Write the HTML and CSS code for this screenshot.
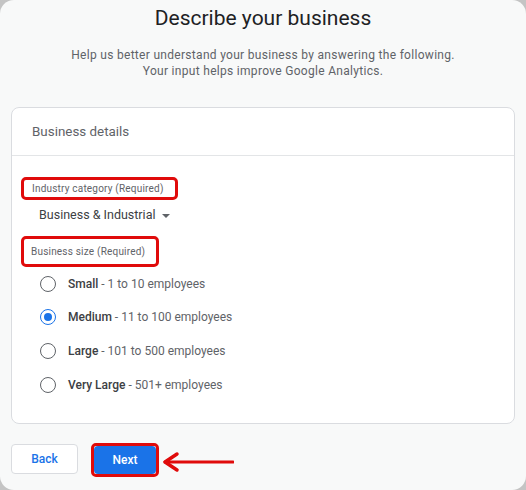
FILE: index.html
```html
<!DOCTYPE html>
<html lang="en">
<head>
  <meta charset="UTF-8">
  <title>Describe your business</title>
  <link rel="stylesheet" href="styles.css">
</head>
<body>
  <div class="frame">
    <h1>Describe your business</h1>
    <p class="intro">Help us better understand your business by answering the following.<br>Your input helps improve Google Analytics.</p>

    <div class="card">
      <div class="card-head">Business details</div>
      <div class="card-body">
        <span class="field-label mark">Industry category (Required)</span>
        <div class="select">Business &amp; Industrial <span class="caret"></span></div>

        <span class="field-label mark tall">Business size (Required)</span>
        <div class="radios">
          <label class="radio"><span class="dot"></span><b>Small</b>&nbsp;- 1 to 10 employees</label>
          <label class="radio on"><span class="dot"></span><b>Medium</b>&nbsp;- 11 to 100 employees</label>
          <label class="radio"><span class="dot"></span><b>Large</b>&nbsp;- 101 to 500 employees</label>
          <label class="radio"><span class="dot"></span><b>Very Large</b>&nbsp;- 501+ employees</label>
        </div>
      </div>
    </div>

    <div class="actions">
      <button class="btn back">Back</button>
      <span class="mark btn-mark"><button class="btn next">Next</button></span>
      <svg class="arrow" width="72" height="22" viewBox="0 0 72 22">
        <path d="M3 11 H71" stroke="#e00b0b" stroke-width="3" stroke-linecap="round" fill="none"/>
        <path d="M15 3 L3 11 L15 19" stroke="#e00b0b" stroke-width="3.5" stroke-linecap="round" stroke-linejoin="round" fill="none"/>
      </svg>
    </div>
  </div>
</body>
</html>
```

FILE: styles.css
```css
body {
  margin: 0;
  background: #c4c4c4;
  font-family: Roboto, "Liberation Sans", sans-serif;
}
.frame {
  width: 526px;
  height: 490px;
  box-sizing: border-box;
  background: #f8f9f9;
  border-radius: 14px;
  padding: 5px 11px 0;
  overflow: hidden;
}
h1 {
  margin: 0;
  text-align: center;
  font-size: 21px;
  line-height: 26px;
  font-weight: 400;
  color: #202124;
}
.intro {
  margin: 16px 0 0;
  text-align: center;
  font-size: 12px;
  line-height: 16px;
  letter-spacing: 0.3px;
  color: #5f6368;
}
.card {
  margin-top: 28px;
  background: #fff;
  border: 1px solid #dadce0;
  border-radius: 8px;
}
.card-head {
  height: 47px;
  line-height: 47px;
  padding-left: 20px;
  font-size: 13.4px;
  color: #5f6368;
  border-bottom: 1px solid #e3e5e7;
}
.card-body {
  padding: 21px 20px 22px 9px;
}
.mark {
  border: 3px solid #e00b0b;
  border-radius: 5px;
}
.field-label {
  display: inline-block;
  padding: 3px 11px 3px 8px;
  font-size: 10px;
  line-height: 11px;
  letter-spacing: 0.2px;
  color: #5f6368;
}
.field-label.tall {
  margin-top: 12px;
  padding: 7px 11px 7px 7px;
}
.select {
  margin: 6px 0 0 18px;
  font-size: 12.5px;
  line-height: 18px;
  color: #3c4043;
}
.caret {
  display: inline-block;
  margin-left: 3px;
  vertical-align: middle;
  border-left: 4px solid transparent;
  border-right: 4px solid transparent;
  border-top: 4px solid #5f6368;
}
.radios {
  display: flex;
  flex-direction: column;
}
.radio {
  display: flex;
  align-items: center;
  height: 33.6px;
  padding-left: 19px;
  font-size: 12px;
  color: #5f6368;
}
.radio b {
  font-weight: 500;
  color: #3c4043;
}
.dot {
  width: 14px;
  height: 14px;
  border: 1.6px solid #5f6368;
  border-radius: 50%;
  margin-right: 12px;
  display: flex;
  align-items: center;
  justify-content: center;
}
.radio.on .dot {
  border-color: #1a73e8;
}
.radio.on .dot::after {
  content: "";
  width: 8px;
  height: 8px;
  border-radius: 50%;
  background: #1a73e8;
}
.actions {
  display: flex;
  align-items: flex-start;
  margin-top: 20px;
}
.btn {
  font-family: Roboto, "Liberation Sans", sans-serif;
  font-size: 12px;
  font-weight: 500;
  border-radius: 4px;
  cursor: pointer;
}
.back {
  width: 67px;
  height: 30px;
  background: #fff;
  border: 1px solid #dadce0;
  color: #1a73e8;
}
.btn-mark {
  display: flex;
  margin: -1px 0 0 13px;
  padding: 0;
}
.next {
  width: 62px;
  height: 28px;
  border: 0;
  background: #1a73e8;
  color: #fff;
}
.arrow {
  margin: 7px 0 0 3px;
}
```
